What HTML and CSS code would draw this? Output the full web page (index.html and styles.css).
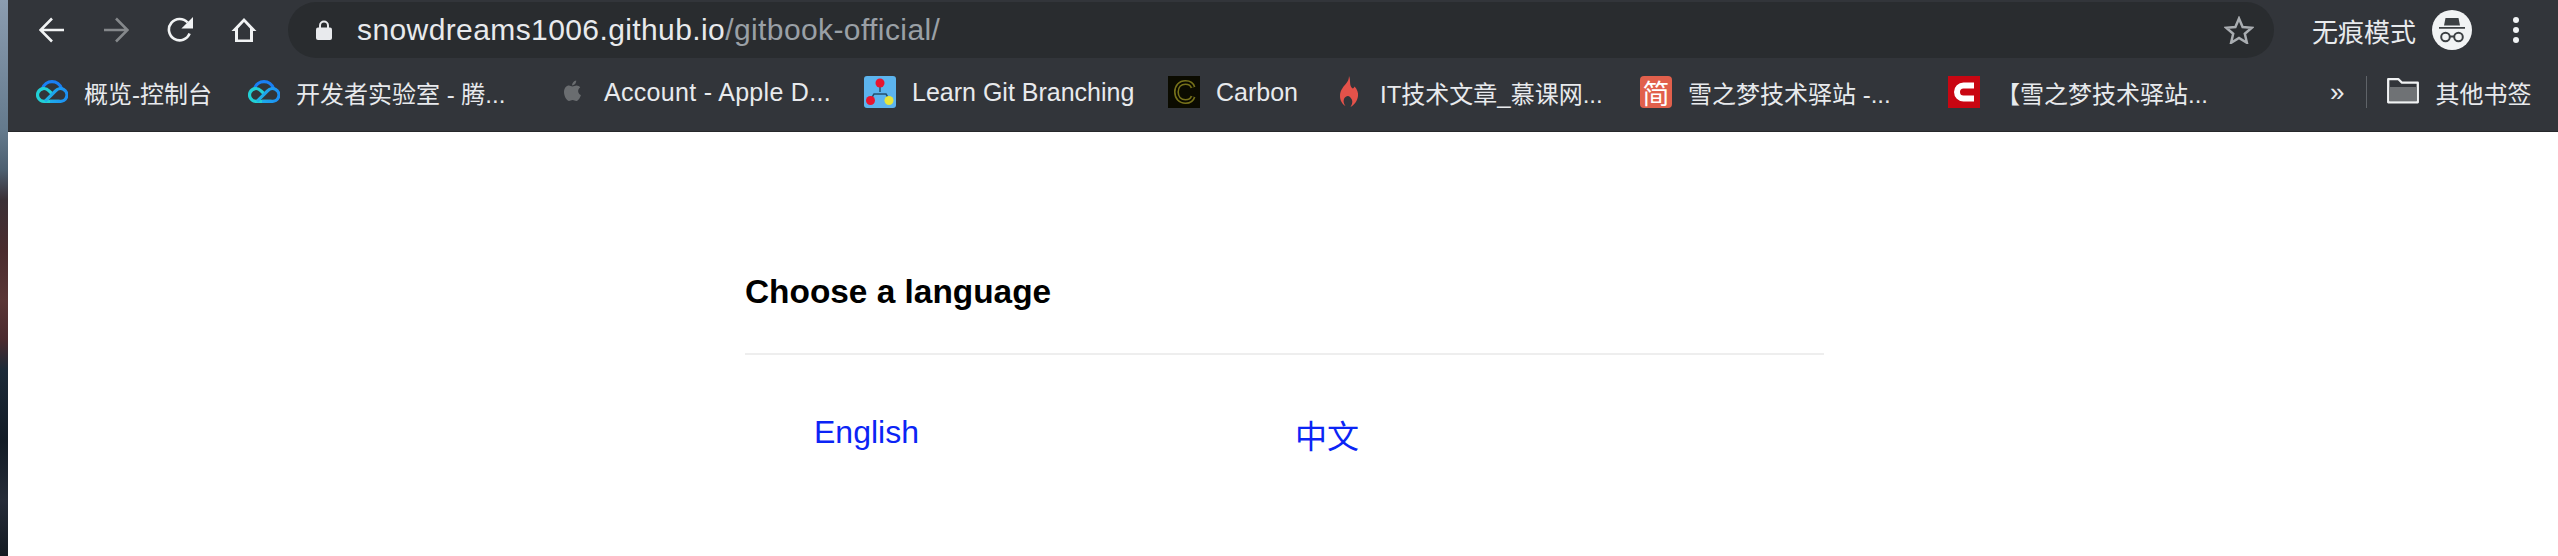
FILE: index.html
```html
<!DOCTYPE html>
<html lang="zh-CN">

<head>
    <meta charset="utf-8">
    <title>Choose a language</title>
    <link rel="stylesheet" href="styles.css">
</head>

<body>
    <div class="wallpaper"></div>

    <div class="window">
        <header class="chrome">
            <!-- Navigation row -->
            <div class="nav-row">
                <div class="nav-buttons">
                    <svg class="nav-icon" viewBox="0 0 26 26"><path d="M25 13H2M13 1.500 1.500 13 13 24.500" fill="none" stroke="#f1f3f4" stroke-width="2.600"/></svg>
                    <svg class="nav-icon" viewBox="0 0 26 26"><path d="M1 13h23M13 1.500 24.500 13 13 24.500" fill="none" stroke="#85888b" stroke-width="2.600"/></svg>
                    <svg class="nav-icon" viewBox="0 0 26 26"><path d="M22.600 16.500A10.700 10.700 0 1 1 20.600 5.500" fill="none" stroke="#f1f3f4" stroke-width="2.600"/><path d="M26 0v11.600H14.400z" fill="#f1f3f4"/></svg>
                    <svg class="nav-icon" viewBox="0 0 26 26"><path d="M13 1 25.500 14H22v11H4V14H.5zM13 5 7 11.500V22.500h12V11.500z" fill="#f1f3f4" fill-rule="evenodd"/></svg>
                </div>

                <div class="address-bar">
                    <svg class="lock" viewBox="0 0 16 20"><path d="M4 9V5.500a4 4 0 0 1 8 0V9" fill="none" stroke="#e8eaed" stroke-width="2"/><rect y="7.500" width="16" height="12.500" rx="2" fill="#e8eaed"/></svg>
                    <span class="url"><span class="url-host">snowdreams1006.github.io</span><span class="url-path">/gitbook-official/</span></span>
                    <svg class="star" viewBox="0 0 30 28"><path d="M15 2.500 18.600 11l9.200.8-7 6 2.100 9L15 22l-7.900 4.800 2.100-9-7-6 9.200-.8z" fill="none" stroke="#a9adb1" stroke-width="2.500"/></svg>
                </div>

                <div class="profile">
                    <span class="profile-label">无痕模式</span>
                    <svg class="profile-icon" viewBox="0 0 40 40">
                        <circle cx="20" cy="20" r="20" fill="#f1f3f4"/>
                        <path d="M13.500 8h13l1.500 7.500H12zM7 17h26v1.800H7z" fill="#3c4043"/>
                        <circle cx="13.500" cy="27" r="4.300" fill="none" stroke="#3c4043" stroke-width="2"/>
                        <circle cx="26.500" cy="27" r="4.300" fill="none" stroke="#3c4043" stroke-width="2"/>
                        <path d="M17.500 26.500h5" stroke="#3c4043" stroke-width="2"/>
                    </svg>
                    <div class="menu-dots"><i></i><i></i><i></i></div>
                </div>
            </div>

            <!-- Bookmarks row -->
            <nav class="bookmarks">
                <div class="bookmark bookmark-console">
                    <svg class="favicon" viewBox="0 0 32 32"><use href="#cloud"/></svg>
                    <span class="label-cjk">概览-控制台</span>
                </div>
                <div class="bookmark bookmark-lab">
                    <svg class="favicon" viewBox="0 0 32 32"><use href="#cloud"/></svg>
                    <span class="label-cjk">开发者实验室 - 腾...</span>
                </div>
                <div class="bookmark bookmark-apple">
                    <svg class="favicon" viewBox="0 0 32 32"><path d="M16.300 10.500c1.500 0 2.700-1 4.300-1 1.400 0 2.800.7 3.600 1.900-3 1.800-2.600 6.200.7 7.500-.7 2.200-2.600 6.100-4.800 6.100-1.300 0-2-.9-3.500-.9s-2.300.9-3.500.9c-2.600 0-5.100-5-5.100-8.900 0-3.800 2.400-6.500 5-6.500 1.300 0 2.300.9 3.300.9zM16 9.500c0-2.500 1.800-4.600 4.200-5 .2 2.600-1.800 4.900-4.200 5z" fill="#6a6d70"/></svg>
                    <span class="label-wide">Account - Apple D...</span>
                </div>
                <div class="bookmark bookmark-git">
                    <svg class="favicon" viewBox="0 0 32 32">
                        <rect width="32" height="32" rx="3" fill="#5cb4ee"/>
                        <path d="M16 10v6M7 23l3-5h12l3 5" fill="none" stroke="#26506e" stroke-width="1.500"/>
                        <circle cx="16" cy="7" r="4.500" fill="#e8152f"/>
                        <circle cx="6.500" cy="24.500" r="4.500" fill="#e8152f"/>
                        <circle cx="25" cy="24.500" r="4.500" fill="#e6e63c"/>
                    </svg>
                    <span>Learn Git Branching</span>
                </div>
                <div class="bookmark bookmark-carbon">
                    <svg class="favicon" viewBox="0 0 32 32">
                        <rect width="32" height="32" fill="#0b0b00"/>
                        <path d="M25 11.500C24 8 21 6.500 17.500 6.500 12 6.500 8.500 10.500 8.500 16s3.500 9.500 9 9.500c3.500 0 6.500-1.500 7.500-5" fill="none" stroke="#77721a" stroke-width="5"/>
                        <path d="M25 11.500C24 8 21 6.500 17.500 6.500 12 6.500 8.500 10.500 8.500 16s3.500 9.500 9 9.500c3.500 0 6.500-1.500 7.500-5" fill="none" stroke="#0b0b00" stroke-width="1.800"/>
                    </svg>
                    <span>Carbon</span>
                </div>
                <div class="bookmark bookmark-imooc">
                    <svg class="favicon" viewBox="0 0 32 32"><path d="M17 0C19 5 17 9 20 12 21 13 22 12 22.500 10.500 25 13 26.500 17 26 20 25.500 25 22 29 18.500 31 21 27 21 24 18 21 16.500 19.500 15 20 13.500 21 11 23 11 27 13.500 30 10 28 8 24 8 20 8 14 12 10 14.500 7 16 5 17 3 17 0z" fill="#e4524a"/></svg>
                    <span class="label-cjk">IT技术文章_慕课网...</span>
                </div>
                <div class="bookmark bookmark-jianshu">
                    <span class="favicon favicon-jianshu">简</span>
                    <span class="label-cjk">雪之梦技术驿站 -...</span>
                </div>
                <div class="bookmark bookmark-csdn">
                    <svg class="favicon" viewBox="0 0 32 32">
                        <rect width="32" height="32" fill="#c90612"/>
                        <path d="M26 9.500H15.500a6.500 6.500 0 0 0 0 13H26" fill="none" stroke="#fff" stroke-width="6"/>
                    </svg>
                    <span class="label-cjk">【雪之梦技术驿站...</span>
                </div>

                <span class="more">»</span>
                <span class="divider"></span>
                <div class="bookmark bookmark-other">
                    <svg class="favicon" viewBox="0 0 32 32">
                        <path d="M1.200 3.200h10.300l3.500 3.500h15.800v19.600H1.200z" fill="#32353a" stroke="#f1f3f4" stroke-width="2.300" stroke-linejoin="round"/>
                        <rect x="2.400" y="11" width="27.200" height="14" fill="#6f7275"/>
                    </svg>
                    <span class="label-cjk">其他书签</span>
                </div>
            </nav>
        </header>

        <main class="page">
            <h2 class="page-title">Choose a language</h2>
            <ul class="languages">
                <li class="language"><a href="#">English</a></li>
                <li class="language language-cjk"><a href="#">中文</a></li>
            </ul>
        </main>
    </div>

    <svg class="sprite" width="0" height="0">
        <defs>
            <linearGradient id="cloud-grad" x1="0" y1="0" x2="1" y2="0">
                <stop offset="0" stop-color="#1fb4e6"/>
                <stop offset="1" stop-color="#1c8ff4"/>
            </linearGradient>
            <symbol id="cloud" viewBox="0 0 32 32">
                <path d="M6.500 12.500A10 10 0 0 1 25.500 12.500" fill="none" stroke="#1a7ff5" stroke-width="3.200"/>
                <path d="M23.500 25.300H8a6.400 6.400 0 1 1 4.800-10.600l3 2.800" fill="none" stroke="#22d0d6" stroke-width="3.200"/>
                <path d="M9 25.300 19.500 15a6.400 6.400 0 1 1 4 10.300H14" fill="none" stroke="url(#cloud-grad)" stroke-width="3.200"/>
            </symbol>
        </defs>
    </svg>
</body>

</html>
```

FILE: styles.css
```css
* {
    margin: 0;
    padding: 0;
    box-sizing: border-box;
}

html,
body {
    height: 100%;
    overflow: hidden;
    background: #fff;
    font-family: 'Liberation Sans', 'Noto Sans CJK SC', sans-serif;
}

body {
    display: flex;
}

.sprite {
    position: absolute;
}

/* Desktop picture peeking out beside the window */
.wallpaper {
    flex: 0 0 8px;
    background: linear-gradient(180deg,
            #8c9db0 0,
            #647a8d 130px,
            #4d5f70 170px,
            #3a3036 200px,
            #4a2c2e 250px,
            #5a3636 300px,
            #4a2a2e 340px,
            #1c2a38 370px,
            #131c26 440px,
            #262c38 500px,
            #141a22 556px);
}

.window {
    flex: 1;
    min-width: 0;
    display: flex;
    flex-direction: column;
}

/* Browser chrome */
.chrome {
    height: 132px;
    background: #32353a;
    border-bottom: 1px solid #26282b;
    color: #e8eaed;
}

.nav-row {
    height: 60px;
    padding-top: 2px;
    display: flex;
}

.nav-buttons {
    flex: 0 0 280px;
    padding: 15px 0 0 31px;
    display: flex;
    gap: 38px;
}

.nav-icon {
    width: 26px;
    height: 26px;
}

.address-bar {
    flex: 0 0 1986px;
    height: 56px;
    padding: 0 20px 0 28px;
    display: flex;
    align-items: center;
    background: #292c2f;
    border-radius: 28px;
}

.lock {
    width: 16px;
    height: 20px;
    margin-right: 25px;
}

.url {
    flex: 1;
    font-size: 30px;
    letter-spacing: 0.4px;
    white-space: nowrap;
}

.url-path {
    color: #9aa0a6;
}

.star {
    width: 30px;
    height: 28px;
}

.profile {
    flex: 1;
    padding-left: 38px;
    display: flex;
    align-items: center;
    height: 56px;
    font-size: 26px;
}

.profile-label {
    white-space: nowrap;
}

.profile-icon {
    flex: none;
    width: 40px;
    height: 40px;
    margin-left: 16px;
}

.menu-dots {
    margin-left: 41px;
    display: flex;
    flex-direction: column;
    gap: 4px;
}

.menu-dots i {
    display: block;
    width: 6px;
    height: 6px;
    border-radius: 50%;
    background: #f1f3f4;
}

/* Bookmarks */
.bookmarks {
    height: 72px;
    padding: 0 0 8px 28px;
    display: flex;
    align-items: center;
    font-size: 25px;
    white-space: nowrap;
}

.bookmark {
    flex: none;
    display: flex;
    align-items: center;
    gap: 16px;
}

.label-cjk {
    font-size: 24px;
}

.label-wide {
    letter-spacing: 0.3px;
}

.favicon {
    flex: none;
    width: 32px;
    height: 32px;
}

.favicon-jianshu {
    display: flex;
    align-items: center;
    justify-content: center;
    background: #e1604c;
    border-radius: 4px;
    color: #fff;
    font-size: 27px;
}

.bookmark-console { width: 212px; }
.bookmark-lab { width: 308px; }
.bookmark-apple { width: 308px; }
.bookmark-git { width: 304px; }
.bookmark-carbon { width: 164px; }
.bookmark-imooc { width: 308px; }
.bookmark-jianshu { width: 308px; }
.bookmark-csdn { width: 382px; }

.more {
    font-size: 26px;
    line-height: 1;
}

.divider {
    width: 1px;
    height: 32px;
    margin: 0 20px 0 22px;
    background: #5f6368;
}

/* Page content */
.page {
    flex: 1;
    padding: 0 0 0 737px;
}

.page-title {
    width: 1079px;
    padding: 141px 0 42px;
    border-bottom: 2px solid #eee;
    color: #000;
    font-size: 33.4px;
    line-height: 38px;
}

.languages {
    list-style: none;
    padding: 58px 0 0 69px;
    display: flex;
}

.language {
    flex: 0 0 481px;
    font-size: 32px;
    line-height: 38px;
}

.language-cjk {
    padding-top: 5px;
}

.language a {
    color: #0b24f5;
    text-decoration: none;
}
```
